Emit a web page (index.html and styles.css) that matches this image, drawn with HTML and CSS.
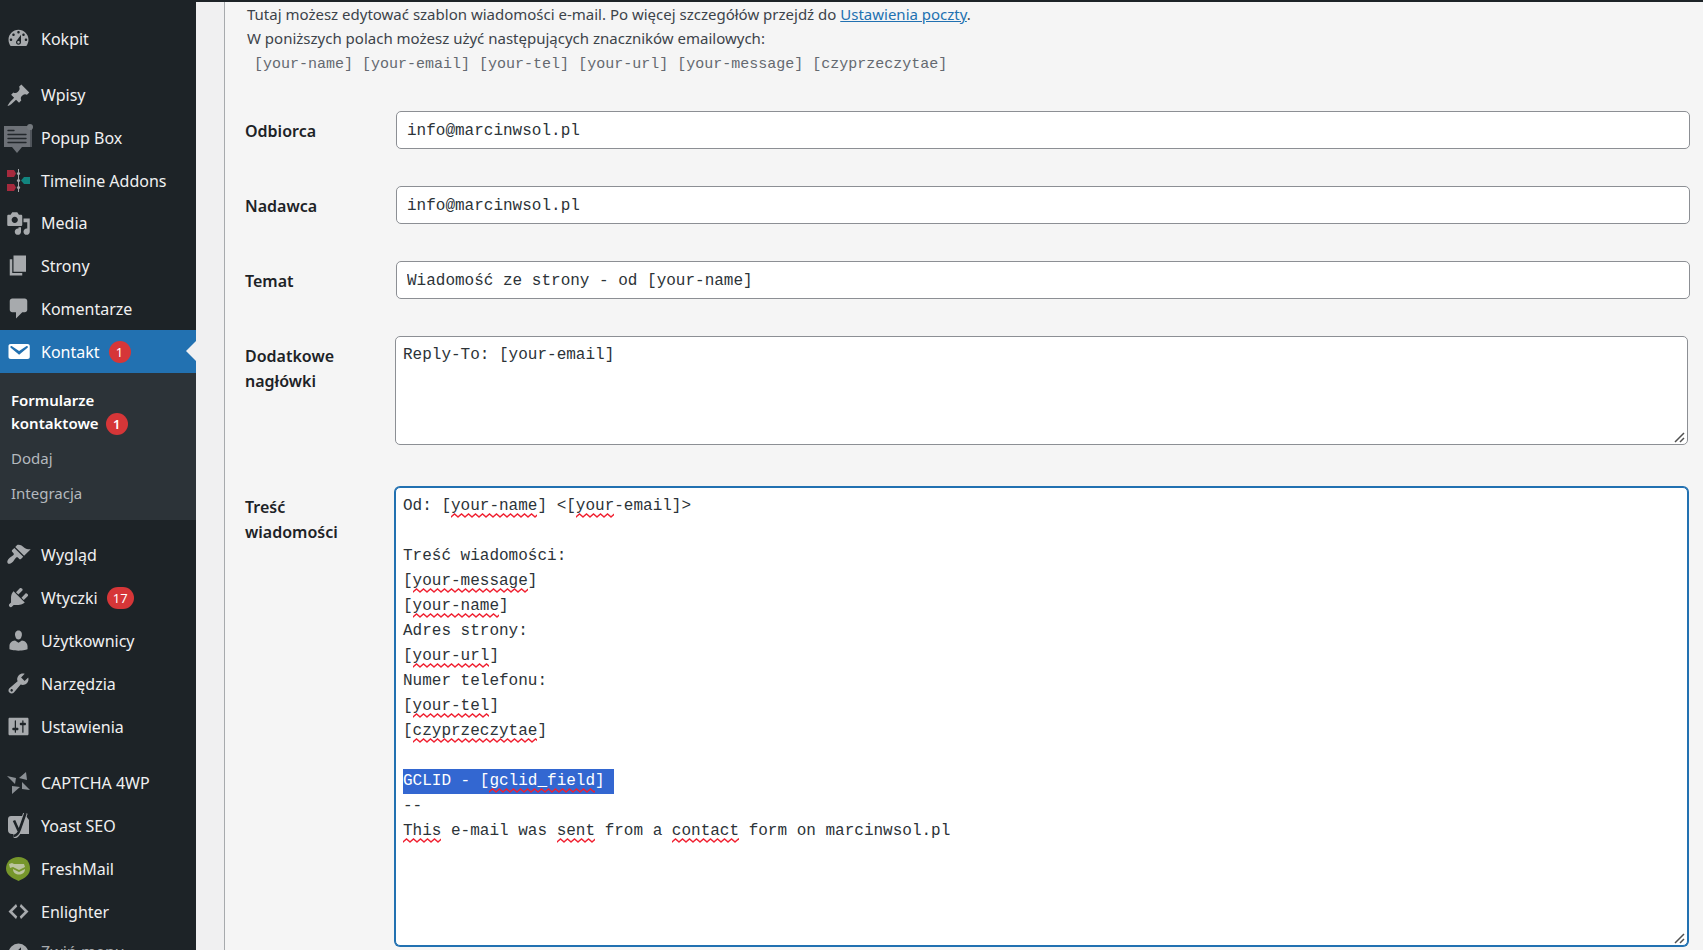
FILE: index.html
```html
<!DOCTYPE html>
<html lang="pl">
<head>
<meta charset="utf-8">
<meta name="viewport" content="width=device-width, initial-scale=1">
<title>Formularze kontaktowe</title>
<link rel="stylesheet" href="styles.css">
<script src="script.js" defer></script>
</head>
<body>
<div class="admin-bar"></div>
<div class="layout">
  <nav class="sidebar" aria-label="Menu główne">
    <ul class="menu">
      <li><a class="menu-link" href="#"><svg class="icon" viewBox="0 0 20 20"><path fill-rule="evenodd" d="M3.76 16h12.48c1.1-1.37 1.76-3.11 1.76-5 0-4.42-3.58-8-8-8s-8 3.58-8 8c0 1.89.66 3.63 1.76 5zM10 4c.55 0 1 .45 1 1s-.45 1-1 1-1-.45-1-1 .45-1 1-1zM6 6c.55 0 1 .45 1 1s-.45 1-1 1-1-.45-1-1 .45-1 1-1zm8 0c.55 0 1 .45 1 1s-.45 1-1 1-1-.45-1-1 .45-1 1-1zm-5.37 5.55L12 7v6c0 1.1-.9 2-2 2s-2-.9-2-2c0-.57.24-1.08.63-1.45zM4 10c.55 0 1 .45 1 1s-.45 1-1 1-1-.45-1-1 .45-1 1-1zm12 0c.55 0 1 .45 1 1s-.45 1-1 1-1-.45-1-1 .45-1 1-1zm-5 3c0-.55-.45-1-1-1s-1 .45-1 1 .45 1 1 1 1-.45 1-1z"/></svg>Kokpit</a></li>
    </ul>
    <ul class="menu menu-content">
      <li><a class="menu-link" href="#"><svg class="icon" viewBox="0 0 20 20"><path d="M10.44 3.02l1.82-1.82 6.36 6.35-1.83 1.82c-1.05-.68-2.48-.57-3.41.36l-.75.75c-.92.93-1.04 2.35-.35 3.41l-1.83 1.82-2.41-2.41-2.8 2.79c-.42.42-3.38 2.71-3.8 2.29s1.86-3.39 2.28-3.81l2.79-2.79L4.1 9.36l1.83-1.82c1.05.69 2.48.57 3.4-.36l.75-.75c.93-.92 1.05-2.35.36-3.41z"/></svg>Wpisy</a></li>
      <li><a class="menu-link" href="#"><svg class="icon icon-wide" viewBox="0 0 30 30"><path fill="#6d7177" d="M0 3h28v21H18l-5 6-5-6H0z"/><path fill="#50555b" d="M26 7h2v17h-2z"/><circle cx="26" cy="4" r="3" fill="#74797e"/><path stroke="#22272b" stroke-width="1.4" stroke-linecap="round" d="M4 7.500h6M4 11.500h18M4 15.500h18M4 19.500h18"/></svg>Popup Box</a></li>
      <li><a class="menu-link" href="#"><svg class="icon" viewBox="0 0 25 25"><path fill="#a52a3d" d="M1 2h7l2 3.500-2 3.500H1zM1 16h7l2 3.500-2 3.500H1z"/><path fill="#12857f" d="M24 9h-6l-3 3.500 3 3.500h6z"/><path stroke="#a7aaad" stroke-width="1" d="M12.500 1v23"/><g fill="#a7aaad"><circle cx="12.500" cy="5.500" r="1.600"/><circle cx="12.500" cy="12.500" r="1.600"/><circle cx="12.500" cy="19.500" r="1.600"/></g></svg>Timeline Addons</a></li>
      <li><a class="menu-link" href="#"><svg class="icon" viewBox="0 0 20 20"><path fill-rule="evenodd" d="M13 11V4c0-.55-.45-1-1-1h-1.67L9 1H5L3.67 3H2c-.55 0-1 .45-1 1v7c0 .55.45 1 1 1h10c.55 0 1-.45 1-1zM7 4.500c1.380 0 2.500 1.120 2.500 2.500S8.380 9.500 7 9.500 4.500 8.380 4.500 7 5.620 4.500 7 4.500zM14 6h5v10.500c0 1.380-1.120 2.500-2.500 2.500S14 17.880 14 16.500s1.120-2.500 2.500-2.500c.17 0 .34.02.5.05V9h-3V6zm-4 8.050V13h2v3.500c0 1.380-1.120 2.500-2.500 2.500S7 17.880 7 16.500 8.120 14 9.500 14c.17 0 .34.02.5.05z"/></svg>Media</a></li>
      <li><a class="menu-link" href="#"><svg class="icon" viewBox="0 0 20 20"><path d="M6 15V2h10v13H6zm-1 1h8v2H3V5h2v11z"/></svg>Strony</a></li>
      <li><a class="menu-link" href="#"><svg class="icon" viewBox="0 0 20 20"><path d="M5 2h10c1.100 0 2 .9 2 2v7c0 1.100-.9 2-2 2h-2l-5 5v-5H5c-1.100 0-2-.9-2-2V4c0-1.100.9-2 2-2z"/></svg>Komentarze</a></li>
    </ul>
    <ul class="menu">
      <li>
        <a class="menu-link menu-link-current" href="#"><svg class="icon" viewBox="0 0 20 20"><path d="M3.870 4h13.250C18.370 4 19 4.590 19 5.790v8.420c0 1.190-.63 1.790-1.880 1.790H3.870c-1.250 0-1.880-.6-1.880-1.790V5.790c0-1.200.63-1.790 1.880-1.790zm6.620 8.600l6.740-5.530c.24-.2.43-.66.13-1.070-.29-.41-.82-.42-1.170-.17l-5.700 3.860L4.800 5.830c-.35-.25-.88-.24-1.170.17-.3.41-.11.87.13 1.070z"/></svg>Kontakt<span class="badge">1</span></a>
        <ul class="submenu">
          <li><a class="submenu-link submenu-link-current" href="#">Formularze kontaktowe<span class="badge">1</span></a></li>
          <li><a class="submenu-link" href="#">Dodaj</a></li>
          <li><a class="submenu-link" href="#">Integracja</a></li>
        </ul>
      </li>
    </ul>
    <ul class="menu">
      <li><a class="menu-link" href="#"><svg class="icon" viewBox="0 0 20 20"><path d="M14.480 11.060L7.410 3.990l1.500-1.500c.5-.56 2.300-.47 3.510.32 1.210.8 1.430 1.280 2.910 2.100 1.180.64 2.450 1.260 4.450.85zm-.71.71L6.700 4.700 4.930 6.470c-.39.39-.39 1.020 0 1.410l1.060 1.060c.39.39.39 1.030 0 1.420-.6.6-1.430 1.110-2.210 1.690-.35.26-.7.53-1.010.84C1.430 14.230.4 16.080 1.400 17.070c.99 1 2.840-.03 4.180-1.360.31-.31.58-.66.85-1.020.57-.78 1.080-1.610 1.690-2.210.39-.39 1.020-.39 1.410 0l1.060 1.060c.39.39 1.020.39 1.410 0z"/></svg>Wygląd</a></li>
      <li><a class="menu-link" href="#"><svg class="icon" viewBox="0 0 20 20"><path d="M13.110 4.360L9.870 7.600 8 5.730l3.240-3.240c.35-.34 1.050-.2 1.560.32.52.51.66 1.210.31 1.550zm-8 1.770l.91-1.120 9.010 9.010-1.190.84c-.71.71-2.630 1.160-3.820 1.160H6.140L4.900 17.260c-.59.59-1.540.59-2.120 0-.59-.58-.59-1.530 0-2.120l1.240-1.240v-3.880c0-1.130.4-3.190 1.090-3.890zm7.260 3.970l3.240-3.240c.34-.35 1.040-.21 1.550.31.52.51.66 1.210.31 1.550l-3.240 3.250z"/></svg>Wtyczki<span class="badge">17</span></a></li>
      <li><a class="menu-link" href="#"><svg class="icon" viewBox="0 0 20 20"><path d="M10 9.250c-2.270 0-2.730-3.440-2.730-3.440C7 4.020 7.820 2 9.970 2c2.160 0 2.980 2.020 2.710 3.810 0 0-.41 3.440-2.680 3.440zm0 2.570L12.720 10c2.390 0 4.520 2.330 4.520 4.530v2.490s-3.650 1.130-7.240 1.130c-3.650 0-7.240-1.130-7.240-1.130v-2.490c0-2.250 1.940-4.480 4.470-4.480z"/></svg>Użytkownicy</a></li>
      <li><a class="menu-link" href="#"><svg class="icon" viewBox="0 0 20 20"><path fill-rule="evenodd" d="M16.680 9.770c-1.340 1.340-3.300 1.670-4.950.99l-5.410 6.520c-.99.99-2.590.99-3.580 0s-.99-2.590 0-3.570l6.520-5.420c-.68-1.650-.35-3.610.99-4.950 1.280-1.280 3.120-1.620 4.720-1.060l-2.890 2.890 2.820 2.820 2.860-2.870c.53 1.580.18 3.390-1.080 4.650zM3.810 16.210c.4.39 1.040.39 1.430 0 .4-.4.4-1.040 0-1.430-.39-.4-1.030-.4-1.430 0-.39.39-.39 1.030 0 1.430z"/></svg>Narzędzia</a></li>
      <li><a class="menu-link" href="#"><svg class="icon" viewBox="0 0 20 20"><path fill-rule="evenodd" d="M18 16V4c0-.55-.45-1-1-1H3c-.55 0-1 .45-1 1v12c0 .55.45 1 1 1h14c.55 0 1-.45 1-1zM8 11h1c.55 0 1 .45 1 1s-.45 1-1 1H8v1.500c0 .28-.22.5-.5.5s-.5-.22-.5-.5V13H6c-.55 0-1-.45-1-1s.45-1 1-1h1V5.500c0-.28.22-.5.5-.5s.5.22.5.5V11zm5-2h-1c-.55 0-1-.45-1-1s.45-1 1-1h1V5.500c0-.28.22-.5.5-.5s.5.22.5.5V7h1c.55 0 1 .45 1 1s-.45 1-1 1h-1v5.500c0 .28-.22.5-.5.5s-.5-.22-.5-.5V9z"/></svg>Ustawienia</a></li>
    </ul>
    <ul class="menu">
      <li><a class="menu-link" href="#"><svg class="icon" viewBox="0 0 25 25"><g fill="#8b9095"><path d="M20 2l1 8-8-2zM1 6l9 2-1 6zM6 24V16l8 1zM24 20l-8-1V12z"/></g></svg>CAPTCHA 4WP</a></li>
      <li><a class="menu-link" href="#"><svg class="icon" viewBox="0 0 25 25"><path d="M5 3h15l3 4v14H6c-2.500 0-4-1.500-4-4V6c0-2 1.300-3 3-3z"/><path fill="none" stroke="#a7aaad" stroke-width="4.500" d="M19.500 0l-6 17c-1.200 4-3 6-6 6.500"/><path fill="none" stroke="#1d2327" stroke-width="2.600" d="M8 7.500l4.500 10M19.500 0l-6 17c-1.200 4-3 5.500-6 6"/></svg>Yoast SEO</a></li>
      <li><a class="menu-link" href="#"><svg class="icon" viewBox="0 0 25 25"><path fill="#76962b" d="M12.500 1C20 1 24 6 24 12.500S19 22 12.500 25C6 22 0 19 0 12.500S5 1 12.500 1z"/><path fill="#bcc4a0" d="M3 8l3-1 2 1h10l1 3-6 3-6-3-3 1zM7 13l6 3 6-3c0 4-3 5.500-6 5.500S7 17 7 13z"/></svg>FreshMail</a></li>
      <li><a class="menu-link" href="#"><svg class="icon" viewBox="0 0 20 20"><path d="M9 6l-4 4 4 4-1 2-6-6 6-6zm2 8l4-4-4-4 1-2 6 6-6 6z"/></svg>Enlighter</a></li>
      <li><button class="menu-link menu-collapse" type="button"><svg class="icon" viewBox="0 0 20 20"><path fill-rule="evenodd" d="M10 2a8 8 0 1 1 0 16 8 8 0 0 1 0-16zm2 3l-5 5 5 5z"/></svg>Zwiń menu</button></li>
    </ul>
  </nav>
  <main class="content">
    <section class="panel">
      <p class="intro">Tutaj możesz edytować szablon wiadomości e-mail. Po więcej szczegółów przejdź do <a class="intro-link" href="#">Ustawienia poczty</a>.<br>W poniższych polach możesz użyć następujących znaczników emailowych:</p>
      <p class="tags"><code>[your-name]</code> <code>[your-email]</code> <code>[your-tel]</code> <code>[your-url]</code> <code>[your-message]</code> <code>[czyprzeczytae]</code></p>
      <form class="form">
        <label class="label" for="recipient">Odbiorca</label>
        <input class="field" id="recipient" type="text" value="info@marcinwsol.pl">
        <label class="label" for="sender">Nadawca</label>
        <input class="field" id="sender" type="text" value="info@marcinwsol.pl">
        <label class="label" for="subject">Temat</label>
        <input class="field" id="subject" type="text" value="Wiadomość ze strony - od [your-name]">
        <label class="label" for="headers">Dodatkowe nagłówki</label>
        <div class="area-wrap"><textarea class="area" id="headers" rows="4" spellcheck="false">Reply-To: [your-email]</textarea></div>
        <label class="label" for="body">Treść wiadomości</label>
        <div class="area-wrap"><textarea class="area" id="body" rows="18" spellcheck="false">Od: [your-name] &lt;[your-email]&gt;

Treść wiadomości:
[your-message]
[your-name]
Adres strony:
[your-url]
Numer telefonu:
[your-tel]
[czyprzeczytae]

GCLID - [gclid_field] 
--
This e-mail was sent from a contact form on marcinwsol.pl</textarea><div class="marks" id="marks" aria-hidden="true"></div></div>
      </form>
    </section>
  </main>
</div>
</body>
</html>
```
FILE: styles.css
```css
* { box-sizing: border-box; }

body {
  margin: 0;
  height: 100vh;
  overflow: hidden;
  display: flex;
  flex-direction: column;
  background: #f0f0f1;
  color: #3c434a;
  font-family: "Noto Sans", "Open Sans", sans-serif;
  font-size: 15px;
}

ul { list-style: none; margin: 0; padding: 0; }
p { margin: 0; }

.admin-bar { flex: none; height: 2px; background: #1d2327; }
.layout { flex: 1; min-height: 0; display: flex; }

/* Sidebar */
.sidebar {
  flex: none;
  width: 196px;
  overflow: hidden;
  padding-top: 15px;
  display: flex;
  flex-direction: column;
  gap: 13px;
  background: #1d2327;
}
.menu { flex: none; }
.menu-content { display: grid; grid-auto-rows: 1fr; height: 256px; margin: 1px 0 -13px; }
.menu-link {
  position: relative;
  display: flex;
  align-items: center;
  width: 100%;
  height: 43px;
  padding: 0 0 0 6px;
  border: 0;
  background: none;
  color: #f0f0f1;
  font: inherit;
  font-size: 16px;
  text-decoration: none;
  white-space: nowrap;
}
.menu-content .menu-link { height: 100%; }
.icon { flex: none; width: 25px; height: 25px; margin-right: 10px; fill: #a7aaad; }
.icon-wide { width: 30px; height: 30px; margin: 0 7px 0 -2px; }
.menu-link-current { background: #2271b1; color: #fff; }
.menu-link-current .icon { fill: #fff; }
.menu-link-current::after {
  content: "";
  position: absolute;
  right: 0;
  top: 11px;
  border: 10px solid transparent;
  border-left: 0;
  border-right-color: #f0f0f1;
}
.menu-collapse { color: #a7aaad; align-items: flex-start; padding-top: 8px; line-height: 22px; }
.badge {
  display: inline-block;
  min-width: 22px;
  margin-left: 9px;
  padding: 0 6px;
  border-radius: 11px;
  background: #d63638;
  color: #fff;
  font-size: 13px;
  line-height: 22px;
  text-align: center;
}

.submenu { padding: 10px 0 9px; background: #2c3338; }
.submenu-link {
  display: block;
  padding: 6px 11px;
  color: #b4b9be;
  font-size: 15px;
  line-height: 23px;
  text-decoration: none;
}
.submenu-link-current { color: #fff; font-weight: 600; }
.submenu-link .badge { margin-left: 7px; }

/* Mail tab */
.content { flex: 1; min-width: 0; padding-left: 28px; }
.panel {
  height: 100%;
  overflow: hidden;
  padding: 0 13px 0 20px;
  border-left: 1px solid #a7aaad;
  background: #f5f5f5;
}
.intro { padding-left: 2px; line-height: 24px; }
.intro-link { color: #2271b1; }
.tags {
  padding: 3px 0 0 9px;
  color: #646970;
  font-family: "Liberation Mono", monospace;
  line-height: 24px;
}
.tags code { font-family: inherit; font-size: 15px; }

.form {
  display: grid;
  grid-template-columns: 150px 1fr;
  align-items: start;
  row-gap: 37px;
  padding-top: 34px;
}
.label {
  width: 120px;
  padding-top: 8px;
  color: #1d2327;
  font-size: 16px;
  font-weight: 600;
  line-height: 25px;
}
.field, .area {
  display: block;
  border: 1px solid #8c8f94;
  border-radius: 5px;
  background: #fff;
  color: #2c3338;
  font-family: "Liberation Mono", monospace;
  font-size: 16px;
  line-height: 25px;
}
.field { height: 38px; margin-left: 1px; padding: 2px 10px 0; }
.area-wrap { position: relative; padding: 0 2px 5px 0; }
.area { width: 100%; margin: 0; padding: 6px 7px 1px; resize: vertical; }
.area:focus { border-color: #2271b1; box-shadow: 0 0 0 1px #2271b1; outline: none; }
.area::selection { background: #3367d1; color: #fff; }
.area::-webkit-resizer {
  background: url("data:image/svg+xml,%3Csvg xmlns='http://www.w3.org/2000/svg' width='15' height='15'%3E%3Cpath d='M3 13l9-9M8 13l4-4' stroke='%23505050' stroke-width='1.500'/%3E%3C/svg%3E") no-repeat right bottom;
}

/* Spelling marks drawn over the message text */
.marks {
  position: absolute;
  left: 8px;
  top: 7px;
  font-family: "Liberation Mono", monospace;
  font-size: 16px;
  pointer-events: none;
}
.mark {
  position: absolute;
  height: 5px;
  background: url("data:image/svg+xml,%3Csvg xmlns='http://www.w3.org/2000/svg' width='7' height='5'%3E%3Cpath d='M-1 5L0 4 3.500 1 7 4 8 5' fill='none' stroke='%23f02030' stroke-width='1.400'/%3E%3C/svg%3E") repeat-x;
}
```
FILE: script.js
```js
const body = document.getElementById('body');
const marks = document.getElementById('marks');
const LINE = 25;
const unknown = /your-(?:name|message|url|tel)|your(?=-email)|czyprzeczytae|gclid_field|This|sent|contact/g;

body.value.split('\n').forEach((line, row) => {
  for (const hit of line.matchAll(unknown)) {
    const mark = document.createElement('span');
    mark.className = 'mark';
    mark.style.left = `${hit.index}ch`;
    mark.style.width = `${hit[0].length}ch`;
    mark.style.top = `${row * LINE + 19}px`;
    marks.append(mark);
  }
});

const start = body.value.indexOf('GCLID');
body.focus({ preventScroll: true });
body.setSelectionRange(start, body.value.indexOf('\n', start));
```
